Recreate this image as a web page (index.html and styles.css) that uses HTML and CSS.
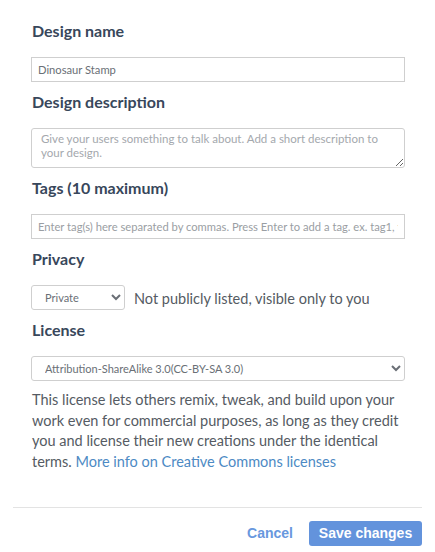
FILE: index.html
```html
<!DOCTYPE html>
<html>
<head>
<meta charset="utf-8">
<link rel="stylesheet" href="styles.css">
</head>
<body>
<div class="dialog">
  <div class="form">
    <h3 class="label">Design name</h3>
    <input class="field" type="text" value="Dinosaur Stamp">
    <h3 class="label">Design description</h3>
    <textarea class="area" placeholder="Give your users something to talk about. Add a short description to your design."></textarea>
    <h3 class="label">Tags (10 maximum)</h3>
    <input class="field" type="text" placeholder="Enter tag(s) here separated by commas. Press Enter to add a tag. ex. tag1, tag2">
    <h3 class="label">Privacy</h3>
    <div class="privacy">
      <select class="select small"><option>Private</option></select>
      <span class="note">Not publicly listed, visible only to you</span>
    </div>
    <h3 class="label">License</h3>
    <select class="select wide"><option>Attribution-ShareAlike 3.0(CC-BY-SA 3.0)</option></select>
    <p class="desc">This license lets others remix, tweak, and build upon your work even for commercial purposes, as long as they credit you and license their new creations under the identical terms. <a class="link" href="#">More info on Creative Commons licenses</a></p>
  </div>
  <div class="footer">
    <button class="cancel" type="button">Cancel</button>
    <button class="save" type="button">Save changes</button>
  </div>
</div>
</body>
</html>
```
FILE: styles.css
```css
html, body {
  margin: 0;
  padding: 0;
  background: #fff;
}
body {
  font-family: Lato, "Noto Sans", sans-serif;
  color: #555b63;
}
.dialog {
  width: 435px;
}
.form {
  padding: 21px 31px 0 31px;
  display: flex;
  flex-direction: column;
}
.label {
  margin: 0 0 16px 1px;
  font-size: 16px;
  line-height: 20px;
  font-weight: 700;
  color: #38475b;
}
.field {
  box-sizing: border-box;
  width: 374px;
  height: 25px;
  margin: 0 0 10px 0;
  padding: 0 6px;
  border: 1px solid #cfcfcf;
  border-radius: 0;
  font-family: Lato, sans-serif;
  font-size: 11.2px;
  color: #6a6f76;
  outline: none;
}
.field::placeholder {
  color: #9a9ea3;
}
.area {
  box-sizing: border-box;
  width: 374px;
  height: 40px;
  margin: 0 0 10px 0;
  padding: 3px 9px;
  border: 1px solid #cfcfcf;
  border-radius: 3px;
  font-family: Lato, sans-serif;
  font-size: 11.5px;
  line-height: 14px;
  color: #6a6f76;
  resize: vertical;
  outline: none;
}
.area::placeholder {
  color: #a4a8ad;
}
.privacy {
  display: flex;
  align-items: center;
  gap: 9px;
  margin-bottom: 10px;
}
.select {
  box-sizing: border-box;
  height: 25px;
  border: 1px solid #cfcfcf;
  border-radius: 3px;
  background: #fff;
  font-family: Lato, sans-serif;
  font-size: 11px;
  color: #6a6f76;
  padding: 0 6px 0 9px;
}
.small {
  width: 94px;
}
.wide {
  width: 374px;
}
.note {
  font-size: 14.5px;
  color: #555b63;
  position: relative;
  top: 1px;
}
.desc {
  margin: 9px 0 0 1px;
  font-size: 14.5px;
  line-height: 20.7px;
  color: #555b63;
}
.link {
  color: #4d8ac4;
  text-decoration: none;
}
.footer {
  margin: 34px 13px 0 13px;
  border-top: 1px solid #e3e3e3;
  padding-top: 13px;
  display: flex;
  justify-content: flex-end;
  align-items: center;
  gap: 16px;
}
.cancel {
  border: none;
  background: none;
  padding: 0;
  font-family: "Liberation Sans", Arial, sans-serif;
  font-weight: 700;
  font-size: 14px;
  color: #6898de;
}
.save {
  border: none;
  border-radius: 3px;
  background: #6393dc;
  color: #fff;
  font-family: "Liberation Sans", Arial, sans-serif;
  font-weight: 700;
  font-size: 14px;
  height: 25px;
  width: 113px;
  padding: 0;
}
```
